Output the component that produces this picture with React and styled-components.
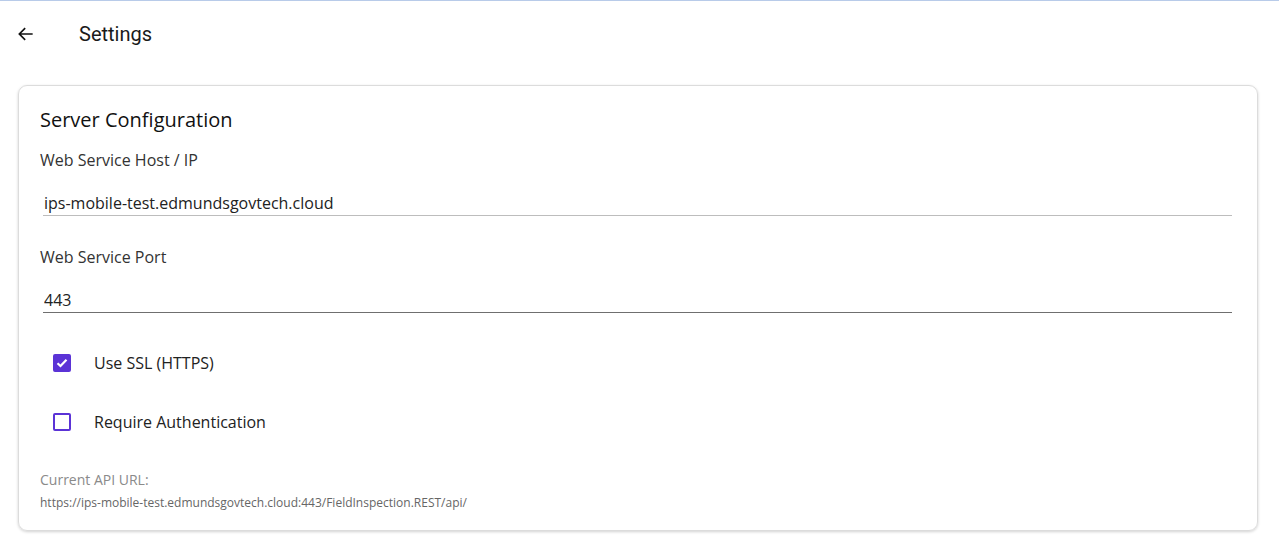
import React from 'react';
import styled, { createGlobalStyle } from 'styled-components';

const GlobalStyle = createGlobalStyle`
	html, body {
		margin: 0;
		padding: 0;
		background: #ffffff;
	}
	body {
		font-family: 'Open Sans', 'Noto Sans', sans-serif;
		color: #222;
	}
`;

const Page = styled.div`
	width: 1279px;
	height: 546px;
	border-top: 1px solid #b8cbe9;
	box-sizing: border-box;
	overflow: hidden;
`;

const Toolbar = styled.header`
	display: flex;
	align-items: center;
	height: 65px;
	padding-left: 16px;
`;

const BackButton = styled.button`
	display: flex;
	align-items: center;
	justify-content: center;
	width: 20px;
	height: 20px;
	padding: 0;
	border: none;
	background: none;
	color: #111;
	cursor: pointer;
`;

const Title = styled.h1`
	margin: 0 0 0 43px;
	font-family: Roboto, 'Liberation Sans', sans-serif;
	font-size: 20px;
	font-weight: 400;
	color: #1a1a1a;
`;

const Card = styled.section`
	margin: 19px 21px 0 18px;
	height: 446px;
	box-sizing: border-box;
	border: 1px solid #dcdcdc;
	border-radius: 9px;
	box-shadow: 0 1px 3px rgba(0, 0, 0, 0.18);
	padding: 20px 24px 0 21px;
`;

const CardTitle = styled.h2`
	margin: 0;
	font-size: 20px;
	line-height: 28px;
	font-weight: 500;
	color: #111;
`;

const FieldLabel = styled.div`
	margin-top: ${p => p.$top}px;
	font-size: 16px;
	line-height: 20px;
	color: #333;
`;

const Input = styled.input`
	display: block;
	width: calc(100% - 4px);
	margin: ${p => p.$top}px 0 0 3px;
	padding: 0 0 0 1px;
	height: 25px;
	box-sizing: border-box;
	border: none;
	border-bottom: 1px solid ${p => (p.$dark ? '#6f6f6f' : '#bdbdbd')};
	font-family: 'Open Sans', 'Noto Sans', sans-serif;
	font-size: 16px;
	color: #222;
	background: transparent;
	outline: none;
`;

const CheckRow = styled.label`
	display: flex;
	align-items: center;
	height: 20px;
	margin-top: ${p => p.$top}px;
	padding-left: 13px;
	font-size: 16px;
	color: #222;
	cursor: pointer;
`;

const Box = styled.span`
	display: flex;
	align-items: center;
	justify-content: center;
	width: 18px;
	height: 18px;
	box-sizing: border-box;
	border-radius: 2px;
	border: 2px solid #5b33d6;
	background: ${p => (p.$checked ? '#5b33d6' : '#fff')};
	margin-right: 23px;
`;

const Hint = styled.div`
	margin-top: 39px;
	font-size: 14px;
	line-height: 18px;
	color: #8a8a8a;
`;

const Url = styled.div`
	margin-top: 7px;
	font-size: 12px;
	line-height: 14px;
	color: #666;
`;

const Checkbox = ({ checked, label, top }) => (
	<CheckRow $top={top}>
		<Box $checked={checked}>
			{checked && (
				<svg width="12" height="10" viewBox="0 0 12 10">
					<path d="M1.5 5.2 L4.5 8 L10.5 1.8" fill="none" stroke="#fff" strokeWidth="2.2" />
				</svg>
			)}
		</Box>
		{label}
	</CheckRow>
);

const App = () => (
	<Page>
		<GlobalStyle />
		<Toolbar>
			<BackButton aria-label="Back">
				<svg width="20" height="20" viewBox="0 0 24 24">
					<path d="M20 12H4.5M11 5l-7 7 7 7" fill="none" stroke="#111" strokeWidth="2" />
				</svg>
			</BackButton>
			<Title>Settings</Title>
		</Toolbar>
		<Card>
			<CardTitle>Server Configuration</CardTitle>
			<FieldLabel $top={16}>Web Service Host / IP</FieldLabel>
			<Input $top={21} defaultValue="ips-mobile-test.edmundsgovtech.cloud" />
			<FieldLabel $top={31}>Web Service Port</FieldLabel>
			<Input $top={21} $dark defaultValue="443" />
			<Checkbox checked label="Use SSL (HTTPS)" top={40} />
			<Checkbox label="Require Authentication" top={39} />
			<Hint>Current API URL:</Hint>
			<Url>https://ips-mobile-test.edmundsgovtech.cloud:443/FieldInspection.REST/api/</Url>
		</Card>
	</Page>
);

export default App;
